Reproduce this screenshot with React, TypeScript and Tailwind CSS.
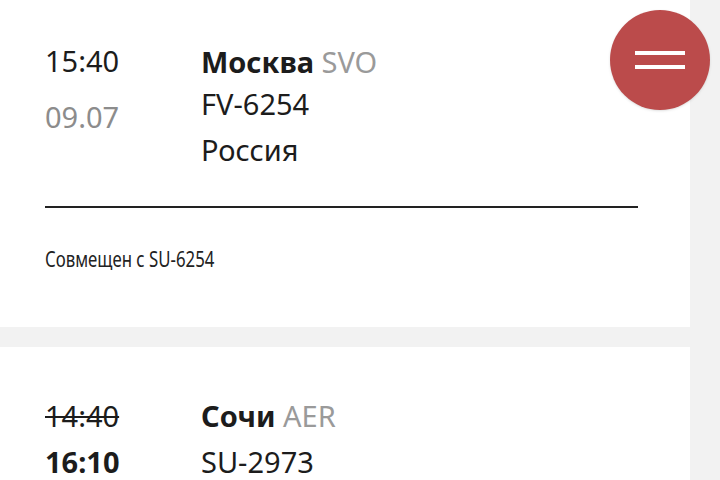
import React from 'react';

const FONT = { fontFamily: '"Noto Sans", "Open Sans", sans-serif' };

export default function App() {
  return (
    <div className="relative w-[720px] h-[480px] overflow-hidden bg-[#f2f2f2] text-[#1c1c1c]" style={FONT}>
      <div className="w-[690px] flex flex-col gap-[20px]">
        {/* Flight card 1 */}
        <div className="bg-white h-[327px] px-[45px] pt-[40px]">
          <div className="flex">
            <div className="w-[156px] flex flex-col">
              <span className="text-[29px] leading-[42px]">15:40</span>
              <span className="text-[29px] leading-[42px] text-[#8c8c8c] mt-[14px]">09.07</span>
            </div>
            <div className="flex flex-col text-[29px] leading-[44px]">
              <span>
                <span className="font-bold">Москва</span> <span className="text-[#9a9a9a]">SVO</span>
              </span>
              <span className="mt-[-2px]">FV-6254</span>
              <span className="mt-[2px]">Россия</span>
            </div>
          </div>
          <div className="mt-[34px] w-[593px] h-[2px] bg-[#222]" />
          <div className="mt-[38px] h-[26px]">
            <div className="origin-left scale-x-[0.8] whitespace-nowrap text-[21px] leading-[26px] text-[#222]">
              Совмещен с SU-6254
            </div>
          </div>
        </div>

        {/* Flight card 2 */}
        <div className="bg-white h-[200px] px-[45px] pt-[46px]">
          <div className="flex">
            <div className="w-[156px] flex flex-col text-[29px] leading-[46px]">
              <span className="line-through decoration-2">14:40</span>
              <span className="font-bold">16:10</span>
            </div>
            <div className="flex flex-col text-[29px] leading-[46px]">
              <span>
                <span className="font-bold">Сочи</span> <span className="text-[#9a9a9a]">AER</span>
              </span>
              <span>SU-2973</span>
            </div>
          </div>
        </div>
      </div>

      {/* Floating menu button */}
      <button className="absolute left-[610px] top-[10px] w-[100px] h-[100px] rounded-full bg-[#bb4b4b] flex flex-col items-center justify-center gap-[10px] shadow-sm">
        <span className="block w-[50px] h-[4px] bg-white" />
        <span className="block w-[50px] h-[4px] bg-white" />
      </button>
    </div>
  );
}
